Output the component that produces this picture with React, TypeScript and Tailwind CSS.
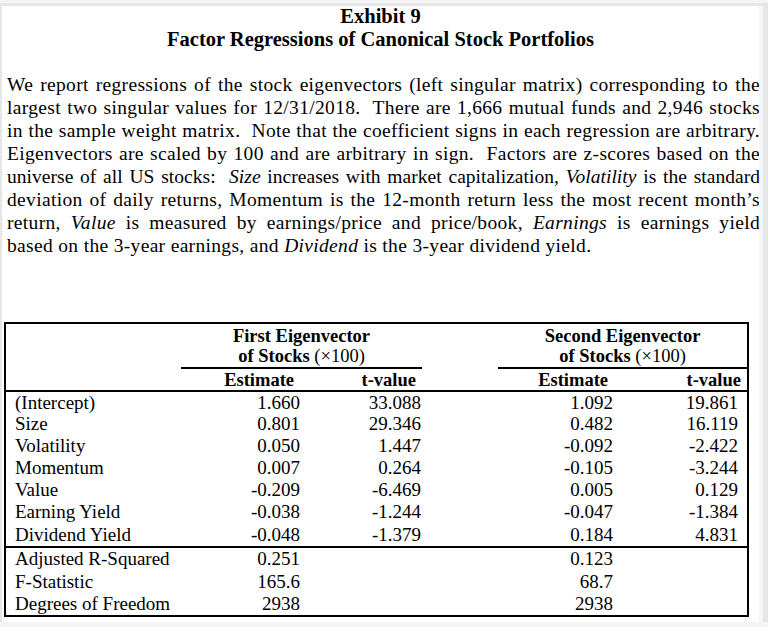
import React from 'react'

const lines: React.ReactNode[] = [
  <>We report regressions of the stock eigenvectors (left singular matrix) corresponding to the</>,
  <>largest two singular values for 12/31/2018.&nbsp; There are 1,666 mutual funds and 2,946 stocks</>,
  <>in the sample weight matrix.&nbsp; Note that the coefficient signs in each regression are arbitrary.</>,
  <>Eigenvectors are scaled by 100 and are arbitrary in sign.&nbsp; Factors are z-scores based on the</>,
  <>
    universe of all US stocks:&nbsp; <i>Size</i> increases with market capitalization, <i>Volatility</i> is the standard
  </>,
  <>deviation of daily returns, Momentum is the 12-month return less the most recent month’s</>,
  <>
    return, <i>Value</i> is measured by earnings/price and price/book, <i>Earnings</i> is earnings yield
  </>,
]

const rows = [
  ['(Intercept)', '1.660', '33.088', '1.092', '19.861'],
  ['Size', '0.801', '29.346', '0.482', '16.119'],
  ['Volatility', '0.050', '1.447', '-0.092', '-2.422'],
  ['Momentum', '0.007', '0.264', '-0.105', '-3.244'],
  ['Value', '-0.209', '-6.469', '0.005', '0.129'],
  ['Earning Yield', '-0.038', '-1.244', '-0.047', '-1.384'],
  ['Dividend Yield', '-0.048', '-1.379', '0.184', '4.831'],
]

const stats = [
  ['Adjusted R-Squared', '0.251', '0.123'],
  ['F-Statistic', '165.6', '68.7'],
  ['Degrees of Freedom', '2938', '2938'],
]

export default function App() {
  return (
    <div className="w-[768px] h-[627px] overflow-hidden bg-[#e5e7e6] border-t-[3px] border-[#f3f4f3] font-['Liberation_Serif',serif] text-black">
      <div className="flex pt-[3px] pl-[2px]">
        <div className="w-[757px] h-[616px] bg-white">
          <div className="text-center font-bold text-[20.5px] leading-[23px] -mt-[1px]">
            <div>Exhibit 9</div>
            <div>Factor Regressions of Canonical Stock Portfolios</div>
          </div>

          <div className="mt-[22px] ml-[5px] w-[753px] text-[19.5px] leading-[23px] tracking-[0.017em]">
            {lines.map((l, i) => (
              <div
                key={i}
                className={
                  i === 4
                    ? 'text-justify [text-align-last:justify] whitespace-nowrap tracking-[0.002em]'
                    : 'text-justify [text-align-last:justify] whitespace-nowrap'
                }
              >
                {l}
              </div>
            ))}
            <div>
              based on the 3-year earnings, and <i>Dividend</i> is the 3-year dividend yield.
            </div>
          </div>

          <table className="mt-[65px] ml-[2px] w-[743px] table-fixed border-collapse border-2 border-black text-[19px] leading-[20px]">
            <colgroup>
              <col className="w-[176px]" />
              <col className="w-[123px]" />
              <col className="w-[118px]" />
              <col className="w-[76px]" />
              <col className="w-[120px]" />
              <col className="w-[130px]" />
            </colgroup>
            <thead>
              <tr>
                <th />
                <th colSpan={2} className="border-b-2 border-black pt-[2px] pb-[1px] text-center text-[18.5px] leading-[20px]">
                  <div>First Eigenvector</div>
                  <div>
                    of Stocks <span className="font-normal">(×100)</span>
                  </div>
                </th>
                <th />
                <th colSpan={2} className="border-b-2 border-black pt-[2px] pb-[1px] text-center text-[18.5px] leading-[20px]">
                  <div>Second Eigenvector</div>
                  <div>
                    of Stocks <span className="font-normal">(×100)</span>
                  </div>
                </th>
              </tr>
              <tr className="border-b-2 border-black h-[23px] text-[18.5px]">
                <th />
                <th className="text-right pr-[10px]">Estimate</th>
                <th className="text-right pr-[6px]">t-value</th>
                <th />
                <th className="text-right pr-[10px]">Estimate</th>
                <th className="text-right pr-[6px]">t-value</th>
              </tr>
            </thead>
            <tbody>
              {rows.map((r, i) => (
                <tr key={r[0]} className={i === rows.length - 1 ? 'h-[24px] border-b-2 border-black' : 'h-[22px]'}>
                  <td className="pl-[9px] whitespace-nowrap">{r[0]}</td>
                  <td className="text-right pr-[4px]">{r[1]}</td>
                  <td className="text-right pr-[1px]">{r[2]}</td>
                  <td />
                  <td className="text-right pr-[5px]">{r[3]}</td>
                  <td className="text-right pr-[9px]">{r[4]}</td>
                </tr>
              ))}
              {stats.map((r) => (
                <tr key={r[0]} className="h-[23px]">
                  <td className="pl-[9px] whitespace-nowrap">{r[0]}</td>
                  <td className="text-right pr-[4px]">{r[1]}</td>
                  <td />
                  <td />
                  <td className="text-right pr-[5px]">{r[2]}</td>
                  <td />
                </tr>
              ))}
            </tbody>
          </table>
        </div>
        <div className="w-[4px] h-[616px] bg-[#f4f5f4]" />
      </div>
      <div className="h-[5px] bg-[#f3f4f3]" />
    </div>
  )
}
